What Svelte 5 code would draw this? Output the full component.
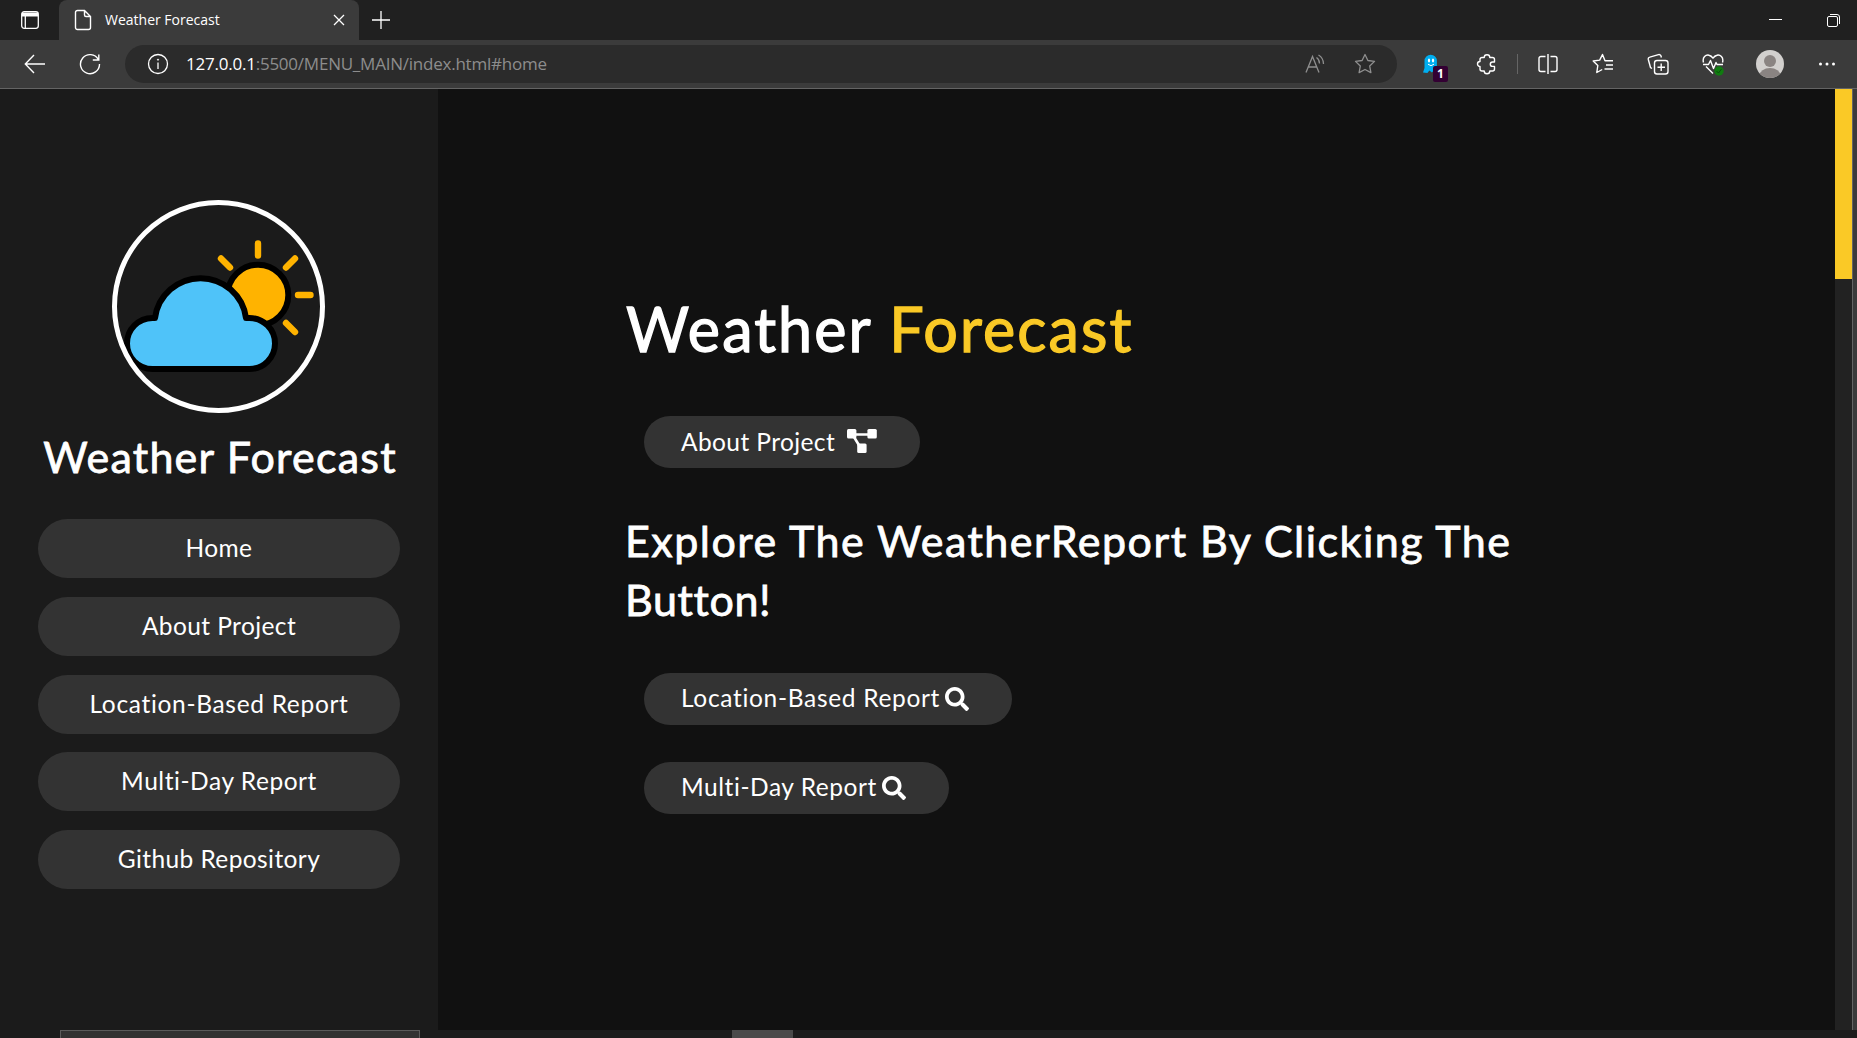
<script>
  const links = [
    { label: 'Home', id: 'home' },
    { label: 'About Project', id: 'about' },
    { label: 'Location-Based Report', id: 'location' },
    { label: 'Multi-Day Report', id: 'multi' },
    { label: 'Github Repository', id: 'github' },
  ];
</script>

{#snippet search()}
  <svg class="search" viewBox="0 0 512 512" width="24" height="24"><path fill="#fff" d="M505 442.7L405.3 343c-4.500-4.500-10.600-7-17-7H372c27.600-35.300 44-79.700 44-128C416 93.100 322.900 0 208 0S0 93.100 0 208s93.100 208 208 208c48.300 0 92.700-16.400 128-44v16.300c0 6.400 2.500 12.500 7 17l99.700 99.700c9.400 9.400 24.600 9.400 33.900 0l28.300-28.300c9.400-9.400 9.400-24.600.1-34zM208 336c-70.700 0-128-57.200-128-128 0-70.700 57.200-128 128-128 70.700 0 128 57.200 128 128 0 70.700-57.200 128-128 128z" /></svg>
{/snippet}

<div class="window">
  <header class="tabs">
    <div class="workspace">
      <svg width="20" height="20" viewBox="0 0 20 20" fill="none" stroke="#fff" stroke-width="1.3"><rect x="1.700" y="1.700" width="16.600" height="16.600" rx="2.500" /><path d="M5.300 6v12" /><path d="M2 2.500h16v4H2z" fill="#fff" stroke="none" /></svg>
    </div>
    <div class="tab">
      <svg class="file" width="18" height="22" viewBox="0 0 18 22" fill="none" stroke="#fff" stroke-width="1.4"><path d="M3.500 1.500h7l6 6v11a2 2 0 0 1-2 2h-11a2 2 0 0 1-2-2v-15a2 2 0 0 1 2-2zM10.500 1.500v4.500a1.500 1.500 0 0 0 1.500 1.500h4.500" /></svg>
      <span class="tab-title">Weather Forecast</span>
      <svg class="close" width="12" height="12" viewBox="0 0 12 12" stroke="#fff" stroke-width="1.3"><path d="M1 1l10 10M11 1L1 11" /></svg>
    </div>
    <svg class="plus" width="18" height="18" viewBox="0 0 18 18" stroke="#fff" stroke-width="1.3"><path d="M9 0v18M0 9h18" /></svg>
    <div class="controls">
      <svg width="14" height="14" viewBox="0 0 14 14" stroke="#fff"><path d="M0 6.500h13" /></svg>
      <svg width="15" height="15" viewBox="0 0 15 15" fill="none" stroke="#fff"><rect x="1.500" y="3.500" width="10" height="10" rx="1.500" /><path d="M4 1.500h7a2.500 2.500 0 0 1 2.500 2.500v7" /></svg>
    </div>
  </header>

  <div class="toolbar">
    <svg class="back" width="22" height="20" viewBox="0 0 22 20" fill="none" stroke="#fff" stroke-width="1.4"><path d="M21 10H1.500M10 1L1.300 10l8.700 9" /></svg>
    <svg class="reload" width="22" height="22" viewBox="0 0 22 22" fill="none" stroke="#fff" stroke-width="1.4"><path d="M19.300 6.500A9.500 9.500 0 1 0 20.500 11M19.800 1.500v5.500h-6" /></svg>
    <div class="address">
      <svg class="info" width="22" height="22" viewBox="0 0 22 22" fill="none" stroke="#fff" stroke-width="1.300"><circle cx="11" cy="11" r="9.500" /><path d="M11 9.500v6.500" /><circle cx="11" cy="6.700" r=".6" fill="#fff" stroke-width=".8" /></svg>
      <span class="url"><b>127.0.0.1</b>:5500/MENU_MAIN/index.html#home</span>
      <svg class="read" width="22" height="20" viewBox="0 0 22 20" fill="none" stroke="#8f8f8f" stroke-width="1.300"><path d="M1 18.500L7.500 2.500 14 18.500M3.500 13h8M11.500 3.500q3 2 3 6M13.500 1q5 3 5 9" /></svg>
      <svg class="star" width="22" height="22" viewBox="0 0 22 22" fill="none" stroke="#8f8f8f" stroke-width="1.300" stroke-linejoin="round"><path d="M11 1.500l2.900 6 6.600.9-4.800 4.600 1.200 6.600-5.900-3.100-5.900 3.100L6.300 13 1.500 8.400l6.600-.9z" /></svg>
    </div>
    <div class="tools">
      <div class="ghost">
        <svg width="17" height="20" viewBox="0 0 17 20"><path d="M2.500 7a6.200 6.300 0 0 1 12.400 0v11l-3-1.500-2 2-2.500-2-2 2.500-4.400-.5L2.500 14z" fill="#00aef0" /><ellipse cx="7" cy="6.500" rx="1.100" ry="1.900" fill="#fff" /><ellipse cx="11" cy="6.500" rx="1.100" ry="1.900" fill="#fff" /><path d="M6 10.200q3 3 6 0" stroke="#fff" fill="none" /></svg>
        <span class="badge">1</span>
      </div>
      <svg class="puzzle" width="22" height="22" viewBox="0 0 22 22" fill="none" stroke="#fff" stroke-width="1.400" stroke-linejoin="round"><path d="M6 4.500h2.200a2.800 2.800 0 0 1 5.600 0H16.500a2 2 0 0 1 2 2V9h-2a2.200 2.200 0 0 0 0 4.400h2V16a2 2 0 0 1-2 2h-2.700a2.800 2.800 0 0 1-5.600 0H6a2 2 0 0 1-2-2v-2.500a2.500 2.500 0 0 1 0-5V6.500a2 2 0 0 1 2-2z" /></svg>
      <i class="sep"></i>
      <svg class="split" width="22" height="22" viewBox="0 0 22 22" fill="none" stroke="#fff" stroke-width="1.400"><path d="M8.500 3.500H4A2 2 0 0 0 2 5.500v11a2 2 0 0 0 2 2h4.500M13.500 3.500H18a2 2 0 0 1 2 2v11a2 2 0 0 1-2 2h-4.500M11 1v20" /></svg>
      <svg class="favorites" width="22" height="22" viewBox="0 0 22 22" fill="none" stroke="#fff" stroke-width="1.400" stroke-linejoin="round"><path d="M21 7.800h-8L10.500 1.500 7.700 7.100 1.200 8l4.600 4.500-1 7 5.400-3M14 12h7M12.500 16h8.500" /></svg>
      <svg class="collections" width="22" height="22" viewBox="0 0 22 22" fill="none" stroke="#fff" stroke-width="1.400"><rect x="7.500" y="7.500" width="13.500" height="13.500" rx="2.500" /><path d="M14.200 10.500v7.500M10.500 14.200H18M5 15.500l-1.500-1L1.300 6.500a2 2 0 0 1 1.500-2.400l8.700-2.500a2 2 0 0 1 2.500 1.400l.4 1.500" /></svg>
      <svg class="heart" width="22" height="23" viewBox="0 0 22 23" fill="none" stroke="#fff" stroke-width="1.400" stroke-linejoin="round"><path d="M1.500 9.500C0 4 4 1.500 7 2.200c2 .4 3 1.500 4 3 1-1.500 2-2.600 4-3 3-.7 7 1.800 5.500 7.300M4 13.500l7 7M1 11.500h5.500l2-4 3 8 2.500-6 1 2H21" /><circle cx="17" cy="18" r="4.700" fill="#107c10" stroke="none" /><path d="M14.500 18l2 2 3-4" stroke="#0b4f0b" stroke-width="1" /></svg>
      <svg class="avatar" width="28" height="28" viewBox="0 0 28 28"><defs><clipPath id="face"><circle cx="14" cy="14" r="14" /></clipPath></defs><g clip-path="url(#face)"><path fill="#d2d0ce" d="M0 0h28v28H0z" /><circle cx="14" cy="11" r="6" fill="#8a8482" /><ellipse cx="14" cy="25.500" rx="10.500" ry="7.500" fill="#8a8482" /></g></svg>
      <svg class="dots" width="18" height="6" viewBox="0 0 18 6" fill="#fff"><circle cx="2.500" cy="3" r="1.500" /><circle cx="9" cy="3" r="1.500" /><circle cx="15.500" cy="3" r="1.500" /></svg>
    </div>
  </div>

  <div class="page">
    <aside>
      <svg class="logo" width="213" height="213" viewBox="0 0 213 213">
        <defs><clipPath id="disc"><circle cx="106.500" cy="106.500" r="104" /></clipPath></defs>
        <g clip-path="url(#disc)">
          <g stroke="#ffb300" stroke-width="6.400" stroke-linecap="round"><path d="M146 43.500v12M109 58.500l9 9M183 58.500l-9 9M186 95h12.500M174 123l9 9" /></g>
          <circle cx="146" cy="95" r="30.300" fill="#ffb300" stroke="#000" stroke-width="6" />
          <path d="M40.500 169a25.500 25.500 0 0 1 0-51h2.500a45.900 45.900 0 0 1 91 0h3.500a25.500 25.500 0 0 1 0 51z" fill="#4fc3f9" stroke="#000" stroke-width="6" stroke-linejoin="round" />
        </g>
        <circle cx="106.500" cy="106.500" r="104" fill="none" stroke="#fff" stroke-width="5" />
      </svg>
      <h2 class="brand">Weather Forecast</h2>
      <nav>
        {#each links as link}
          <a class={link.id}>{link.label}</a>
        {/each}
      </nav>
    </aside>
    <main>
      <h1><span class="white">Weather</span> <span class="yellow">Forecast</span></h1>
      <a class="pill first"><span class="about">About Project</span>
        <svg class="diagram" width="30" height="24" viewBox="0 0 30 24"><path d="M9 5.500h12M7 8l5.500 9" stroke="#fff" stroke-width="2.600" /><g fill="#fff"><rect width="9.400" height="9.400" rx="1.500" /><rect x="20.400" width="9.400" height="9.400" rx="1.500" /><rect x="10.200" y="14.500" width="9.400" height="9.400" rx="1.500" /></g></svg>
      </a>
      <h2 class="explore"><span class="line-one">Explore The WeatherReport By Clicking The</span><br /><span class="line-two">Button!</span></h2>
      <a class="pill second"><span class="location">Location-Based Report</span>{@render search()}</a>
      <a class="pill third"><span class="multi">Multi-Day Report</span>{@render search()}</a>
    </main>
    <div class="scrollbar"><i></i></div>
  </div>

  <footer><div class="taskbox"></div><div class="active"></div></footer>
</div>

<style>
  :global(body) { margin: 0; background: #1b1b1b; }
  .window { width: 1857px; height: 1038px; overflow: hidden; display: flex; flex-direction: column; background: #3b3b3b; color: #fff; }
  svg { display: block; flex: none; }
  .tabs { height: 40px; background: #202020; display: flex; align-items: center; font: 14px "Open Sans", sans-serif; }
  .workspace { width: 59px; box-sizing: border-box; padding-left: 20px; }
  .tab { width: 300px; height: 40px; box-sizing: border-box; padding: 0 14px 0 15px; background: #3b3b3b; border-radius: 8px 8px 0 0; display: flex; align-items: center; }
  .tab-title { margin-left: 13px; padding-bottom: 1px; white-space: nowrap; }
  .close { margin-left: auto; }
  .plus { margin-left: 13px; margin-bottom: 1px; }
  .controls { margin-left: auto; margin-right: 16px; display: flex; align-items: center; gap: 43px; }
  .toolbar { height: 48px; display: flex; align-items: center; border-bottom: 1px solid #646464; flex: none; }
  .back { margin-left: 24px; margin-bottom: 1px; }
  .reload { margin-left: 33px; margin-bottom: 1px; }
  .address { margin-left: 24px; width: 1272px; height: 38px; border-radius: 19px; background: #2b2b2b; display: flex; align-items: center; flex: none; }
  .info { margin-left: 22px; }
  .url { margin-left: 17px; padding-bottom: 2px; font: 17px "Open Sans", sans-serif; color: #8d8d8d; white-space: nowrap; letter-spacing: -.23px; }
  .url b { color: #fff; font-weight: 400; }
  .read { margin-left: auto; }
  .star { margin: 0 21px 0 27px; }
  .tools { display: flex; align-items: center; flex: 1; }
  .ghost { position: relative; margin-left: 25px; }
  .badge { position: absolute; left: 11px; top: 12px; width: 15px; height: 16px; background: #330033; border-radius: 2px; font: bold 12px/16px "Open Sans", sans-serif; text-align: center; }
  .puzzle { margin-left: 37px; }
  .sep { width: 1px; height: 20px; background: #656565; margin-left: 19px; }
  .split { margin-left: 19px; }
  .favorites, .collections, .heart { margin-left: 33px; }
  .avatar { margin-left: 32px; }
  .dots { margin-left: 34px; }
  .page { height: 941px; width: 1852px; border-right: 1px solid #646464; display: flex; flex: none; background: #111; font-family: Lato, sans-serif; }
  aside { width: 438px; background: #1b1b1b; display: flex; flex-direction: column; align-items: center; flex: none; }
  .logo { margin-top: 111px; margin-right: 1px; }
  h1, h2 { font-weight: 400; margin: 0; white-space: nowrap; -webkit-text-stroke: .8px currentColor; }
  .brand { margin-top: 14px; padding-left: 2px; font-size: 43px; line-height: 60px; letter-spacing: 1.230px; }
  nav { margin-top: 32px; display: flex; flex-direction: column; gap: 18.800px; }
  nav a { width: 362px; height: 59px; line-height: 57px; border-radius: 29.500px; background: #333; text-align: center; font-size: 24.500px; letter-spacing: .4px; }
  .location { letter-spacing: .68px; }
  .multi { letter-spacing: .55px; }
  main { flex: 1; padding-left: 187px; display: flex; flex-direction: column; align-items: flex-start; }
  h1 { margin: 198px 0 0 1px; font-size: 61px; line-height: 84px; letter-spacing: 2.100px; -webkit-text-stroke-width: 1.300px; }
  .yellow { color: #fac926; }
  .pill { margin-left: 19px; height: 52px; border-radius: 26px; background: #333; padding-left: 37px; box-sizing: border-box; display: flex; align-items: center; font-size: 24.500px; letter-spacing: .4px; white-space: nowrap; }
  .pill span { padding-bottom: 2px; }
  .first { margin-top: 45px; width: 276px; }
  .second { margin-top: 43px; width: 368px; }
  .third { margin-top: 37px; width: 305px; }
  .pill .about { width: 166px; }
  .pill .location { width: 264px; }
  .pill .multi { width: 201px; }
  .diagram { margin-bottom: 3px; }
  .explore { margin-top: 43px; font-size: 43px; line-height: 59.300px; letter-spacing: 1.490px; }
  .line-two { letter-spacing: .6px; }
  .scrollbar { width: 17px; background: #222; }
  .scrollbar i { display: block; height: 190px; background: #fac926; }
  footer { height: 8px; display: flex; background: #1c1c1c; }
  .taskbox { margin-left: 60px; width: 360px; box-sizing: border-box; background: #323232; border: 1px solid #5b5b5b; border-bottom: 0; }
  .active { margin-left: 312px; width: 61px; background: #4a4a4a; }
</style>
